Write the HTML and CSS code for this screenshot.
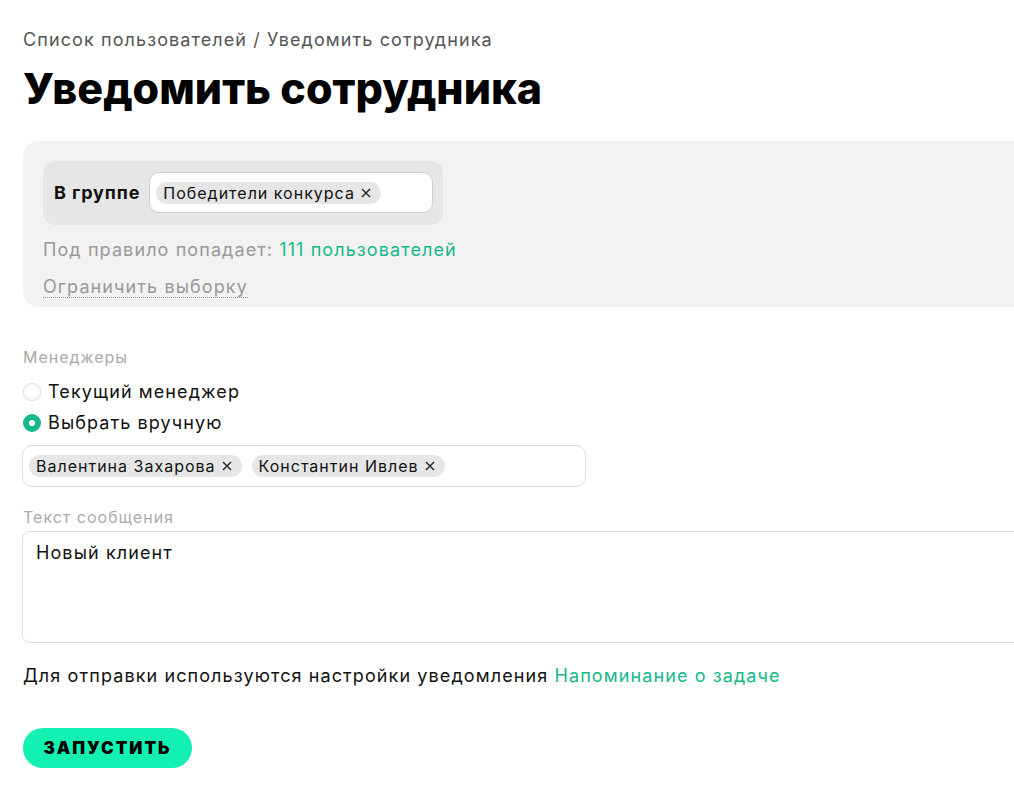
FILE: index.html
```html
<!DOCTYPE html>
<html lang="ru">
<head>
    <meta charset="UTF-8">
    <meta name="viewport" content="width=device-width, initial-scale=1.0">
    <title>Уведомить сотрудника</title>
    <link rel="stylesheet" href="styles.css">
</head>
<body>
    <div class="page">
        <div class="crumbs">Список пользователей / Уведомить сотрудника</div>
        <h1 class="title">Уведомить сотрудника</h1>

        <div class="rule">
            <div class="groupRow">
                <span class="groupLabel">В группе</span>
                <div class="groupInput">
                    <span class="chip">Победители конкурса
                        <svg class="chipX" viewBox="0 0 10 10"><path d="M1 1L9 9M9 1L1 9"/></svg>
                    </span>
                </div>
            </div>
            <div class="ruleCount">Под правило попадает: <a href="#" class="link">111 пользователей</a></div>
            <div class="ruleLimit"><span class="dotted">Ограничить выборку</span></div>
        </div>

        <div class="fieldLabel labelManagers">Менеджеры</div>
        <label class="radio"><span class="radioDot"></span>Текущий менеджер</label>
        <label class="radio"><span class="radioDot on"></span>Выбрать вручную</label>
        <div class="tagInput">
            <span class="chip">Валентина Захарова
                <svg class="chipX" viewBox="0 0 10 10"><path d="M1 1L9 9M9 1L1 9"/></svg>
            </span>
            <span class="chip">Константин Ивлев
                <svg class="chipX" viewBox="0 0 10 10"><path d="M1 1L9 9M9 1L1 9"/></svg>
            </span>
        </div>

        <div class="fieldLabel labelText">Текст сообщения</div>
        <div class="textBox">Новый клиент</div>

        <p class="note">Для отправки используются настройки уведомления <a href="#" class="link">Напоминание о задаче</a></p>

        <button class="btnRun">Запустить</button>
    </div>
</body>
</html>
```

FILE: styles.css
```css
html, body {
    overflow: hidden;
}
body {
    margin: 0;
    font-family: "Inter", "Noto Sans", sans-serif;
    letter-spacing: 1.1px;
    color: #111;
    background: #fff;
}
.page {
    width: 1080px;
    padding: 28px 0 0 23px;
}
.crumbs {
    font-size: 18px;
    line-height: 24px;
    color: #555;
}
.title {
    margin: 8px 0 0;
    font-size: 43px;
    line-height: 56px;
    font-weight: 800;
    letter-spacing: 0;
    color: #000;
}
.rule {
    margin-top: 25px;
    background: #f2f2f2;
    border-radius: 16px;
    padding: 20px 20px 8px;
}
.groupRow {
    display: inline-flex;
    align-items: center;
    gap: 9px;
    background: #e6e6e6;
    border-radius: 12px;
    padding: 11px 10px 12px 11px;
}
.groupLabel {
    font-size: 18px;
    font-weight: 700;
    letter-spacing: 0.9px;
}
.groupInput {
    width: 270px;
    height: 39px;
    background: #fff;
    border: 1px solid #cfcfcf;
    border-radius: 10px;
    display: flex;
    align-items: center;
    padding: 0 6px;
}
.chip {
    display: inline-flex;
    align-items: center;
    gap: 6px;
    height: 22px;
    padding: 0 10px 0 7px;
    background: #e6e6e6;
    border-radius: 11px;
    font-size: 16px;
    letter-spacing: 1px;
    color: #111;
}
.chipX {
    width: 10px;
    height: 10px;
    fill: none;
    stroke: #222;
    stroke-width: 1.4;
}
.ruleCount {
    margin-top: 13px;
    font-size: 18px;
    line-height: 24px;
    color: #999;
}
.ruleLimit {
    margin-top: 13px;
    font-size: 18px;
    line-height: 24px;
    color: #999;
}
.dotted {
    border-bottom: 1px dotted #999;
}
.link {
    color: #15b98a;
    text-decoration: none;
}
.fieldLabel {
    font-size: 16px;
    line-height: 20px;
    letter-spacing: 1px;
    color: #aaa;
}
.labelManagers {
    margin-top: 40px;
}
.radio {
    display: flex;
    align-items: center;
    gap: 7px;
    font-size: 18px;
    line-height: 31px;
}
.radio:first-of-type {
    margin-top: 9px;
}
.radioDot {
    width: 16px;
    height: 16px;
    border: 1px solid #d6d6d6;
    border-radius: 50%;
    background: #fff;
    box-sizing: content-box;
}
.radioDot.on {
    width: 6px;
    height: 6px;
    border: 6px solid #15b98a;
}
.tagInput {
    margin-top: 7px;
    width: 550px;
    height: 40px;
    border: 1px solid #ddd;
    border-radius: 10px;
    display: flex;
    align-items: center;
    gap: 10px;
    padding: 0 6px;
    margin-left: -1px;
}
.labelText {
    margin-top: 20px;
}
.textBox {
    margin-top: 4px;
    margin-left: -1px;
    height: 92px;
    border: 1px solid #ddd;
    border-radius: 8px;
    padding: 9px 13px;
    font-size: 18px;
    line-height: 24px;
}
.note {
    margin: 20px 0 0;
    font-size: 18px;
    line-height: 26px;
}
.btnRun {
    margin-top: 39px;
    width: 169px;
    height: 40px;
    border: none;
    border-radius: 20px;
    background: #12f0b2;
    font-family: inherit;
    font-size: 17px;
    font-weight: 900;
    letter-spacing: 2px;
    text-transform: uppercase;
    color: #000;
}
```
